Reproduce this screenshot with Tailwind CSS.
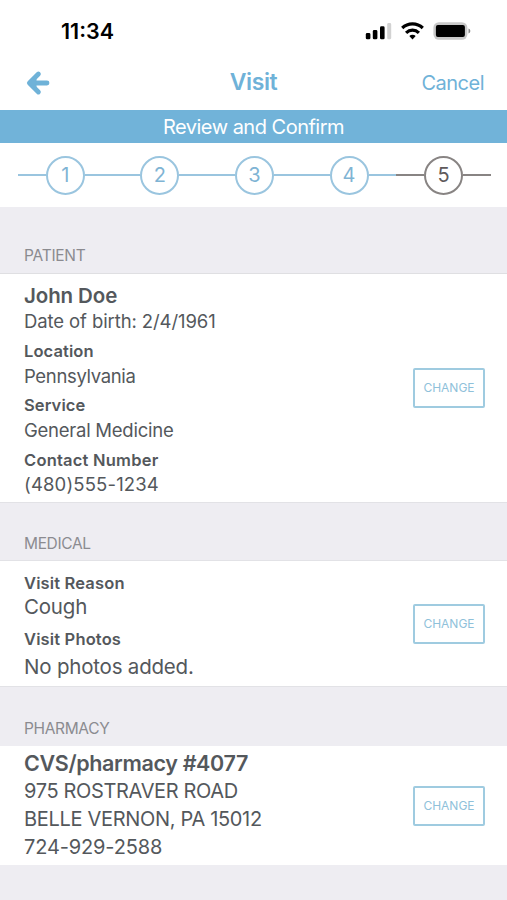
<!DOCTYPE html>
<html lang="en">
<head>
<meta charset="utf-8">
<title>Visit</title>
<script src="https://cdn.jsdelivr.net/npm/@tailwindcss/browser@4"></script>
</head>
<body class="w-[507px] h-[900px] overflow-hidden bg-[#eeedf2] font-['Inter','Liberation_Sans',sans-serif] text-[#54585c] whitespace-nowrap">
<header class="bg-white">
  <div class="h-[60px] flex items-center justify-between pl-[61px] pr-[36px] pt-[2px]">
    <span class="text-[21.5px] font-semibold text-black">11:34</span>
    <div class="flex items-center">
      <svg class="w-[27px] h-[18px]" viewBox="0 0 27 18"><g fill="#000"><rect x="0.8" y="11" width="4.6" height="6.3" rx="1.4"/><rect x="7.8" y="8" width="4.6" height="9.3" rx="1.4"/><rect x="15" y="4.3" width="4.6" height="13" rx="1.4"/></g><rect x="22.2" y="1" width="4" height="16.3" rx="1.4" fill="#d2d2d2"/></svg>
      <svg class="w-[23px] h-[18px] ml-[9px]" viewBox="0 0 23 18" fill="none" stroke="#000" stroke-width="3.2"><path d="M1.2 6C7 .5 16 .5 21.8 6"/><path d="M5.1 10.8c3.7-3.6 9.1-3.6 12.8 0"/><path d="M11.5 17.5l-3.2-3.4c1.9-1.7 4.5-1.7 6.4 0z" fill="#000" stroke="none"/></svg>
      <svg class="w-[38px] h-[18px] ml-[9px]" viewBox="0 0 38 18"><rect x=".4" y=".2" width="34" height="17.6" rx="5.5" fill="#c9c9c9"/><rect x="2.9" y="3" width="29" height="12" rx="2" fill="#000"/><path d="M35.5 6.5c2.4.8 2.4 4.2 0 5z" fill="#888"/></svg>
    </div>
  </div>
  <div class="h-[50px] grid grid-cols-3 items-center px-[23px] pb-[4px] text-[#6fb2d8]">
    <svg class="w-[28px] h-[26px] ml-[2px]" viewBox="0 0 28 26" fill="none" stroke="currentColor" stroke-width="4.8" stroke-linecap="round" stroke-linejoin="round"><path d="M13.4 4L4.4 13l9 9M5.5 13h16.5"/><path d="M3.5 13l8-7v14z" fill="currentColor" stroke="none"/></svg>
    <h1 class="text-center text-[23px] font-semibold tracking-[-0.4px] -mt-px">Visit</h1>
    <span class="text-right text-[20px] tracking-[-0.5px]">Cancel</span>
  </div>
</header>
<div class="h-[33px] bg-[#71b3d9] text-white text-[20px] tracking-[-0.5px] flex items-center justify-center pt-[1px]">Review and Confirm</div>
<nav class="h-[64px] bg-white flex items-center px-[18px] text-[20px]">
  <div class="flex items-center shrink-0 w-[94.6px] text-[#7fb4d4]"><i class="flex-1 h-[1.5px] bg-[#9ac5df]"></i><span class="size-[39px] rounded-full border-2 border-[#9ac5df] flex items-center justify-center">1</span><i class="flex-1 h-[1.5px] bg-[#9ac5df]"></i></div>
  <div class="flex items-center shrink-0 w-[94.6px] text-[#7fb4d4]"><i class="flex-1 h-[1.5px] bg-[#9ac5df]"></i><span class="size-[39px] rounded-full border-2 border-[#9ac5df] flex items-center justify-center">2</span><i class="flex-1 h-[1.5px] bg-[#9ac5df]"></i></div>
  <div class="flex items-center shrink-0 w-[94.6px] text-[#7fb4d4]"><i class="flex-1 h-[1.5px] bg-[#9ac5df]"></i><span class="size-[39px] rounded-full border-2 border-[#9ac5df] flex items-center justify-center">3</span><i class="flex-1 h-[1.5px] bg-[#9ac5df]"></i></div>
  <div class="flex items-center shrink-0 w-[94.6px] text-[#7fb4d4]"><i class="flex-1 h-[1.5px] bg-[#9ac5df]"></i><span class="size-[39px] rounded-full border-2 border-[#9ac5df] flex items-center justify-center">4</span><i class="flex-1 h-[1.5px] bg-[#9ac5df]"></i></div>
  <div class="flex items-center shrink-0 w-[94.6px] text-[#5e5a5b]"><i class="flex-1 h-[1.5px] bg-[#888483]"></i><span class="size-[39px] rounded-full border-2 border-[#888483] flex items-center justify-center">5</span><i class="flex-1 h-[1.5px] bg-[#888483]"></i></div>
</nav>
<h2 class="h-[67px] pt-[38px] pl-[24px] text-[15.5px] leading-[22px] tracking-[-0.25px] text-[#8b8b90] border-b border-[#dfdfe2]">PATIENT</h2>
<section class="h-[228px] bg-white flex items-center justify-between pl-[24px] pr-[22px]">
  <div class="self-start pt-[8px]">
    <p class="text-[20.5px] leading-[28px] font-semibold tracking-[-0.1px]">John Doe</p>
    <p class="text-[18.5px] leading-[23px] tracking-[-0.1px]">Date of birth: 2/4/1961</p>
    <p class="mt-[6px] text-[16.5px] leading-[24px] font-semibold tracking-[0.1px]">Location</p>
    <p class="text-[18.5px] leading-[26px] tracking-[-0.35px]">Pennsylvania</p>
    <p class="mt-[4px] text-[16.5px] leading-[25px] font-semibold tracking-[0.1px]">Service</p>
    <p class="text-[18.5px] leading-[25px] tracking-[-0.25px]">General Medicine</p>
    <p class="mt-[5px] text-[16.5px] leading-[24px] font-semibold tracking-[0.22px]">Contact Number</p>
    <p class="text-[18.5px] leading-[25px] tracking-[0.15px]">(480)555-1234</p>
  </div>
  <button class="w-[72px] h-[40px] -mt-px border-2 border-[#9fcbe0] rounded-[2px] text-[#8fc1da] text-[12px]">CHANGE</button>
</section>
<h2 class="h-[59px] pt-[30px] pl-[24px] text-[15.5px] leading-[22px] tracking-[-0.35px] text-[#8b8b90] border-y border-[#e2e2e6]">MEDICAL</h2>
<section class="h-[125px] bg-white flex items-center justify-between pl-[24px] pr-[22px]">
  <div class="self-start pt-[10px]">
    <p class="text-[16.5px] leading-[24px] font-semibold tracking-[0.15px]">Visit Reason</p>
    <p class="text-[20.5px] leading-[24px] tracking-[-0.2px]">Cough</p>
    <p class="mt-[8px] text-[16.5px] leading-[24px] font-semibold tracking-[0.15px]">Visit Photos</p>
    <p class="text-[20.5px] leading-[31px] tracking-[-0.2px]">No photos added.</p>
  </div>
  <button class="w-[72px] h-[40px] border-2 border-[#9fcbe0] rounded-[2px] text-[#8fc1da] text-[12px]">CHANGE</button>
</section>
<h2 class="h-[60px] pt-[31px] pl-[24px] text-[15.5px] leading-[22px] tracking-[-0.35px] text-[#8b8b90] border-t border-[#e2e2e6]">PHARMACY</h2>
<section class="h-[119px] bg-white flex items-center justify-between pl-[24px] pr-[22px]">
  <div class="self-start pt-[3px]">
    <p class="text-[21.5px] leading-[28px] font-semibold tracking-[-0.35px]">CVS/pharmacy #4077</p>
    <p class="text-[20px] leading-[28px] tracking-[-0.35px]">975 ROSTRAVER ROAD</p>
    <p class="text-[20px] leading-[28px] tracking-[-0.32px]">BELLE VERNON, PA 15012</p>
    <p class="text-[20px] leading-[28px] tracking-[-0.15px]">724-929-2588</p>
  </div>
  <button class="w-[72px] h-[40px] border-2 border-[#9fcbe0] rounded-[2px] text-[#8fc1da] text-[12px]">CHANGE</button>
</section>
</body>
</html>
